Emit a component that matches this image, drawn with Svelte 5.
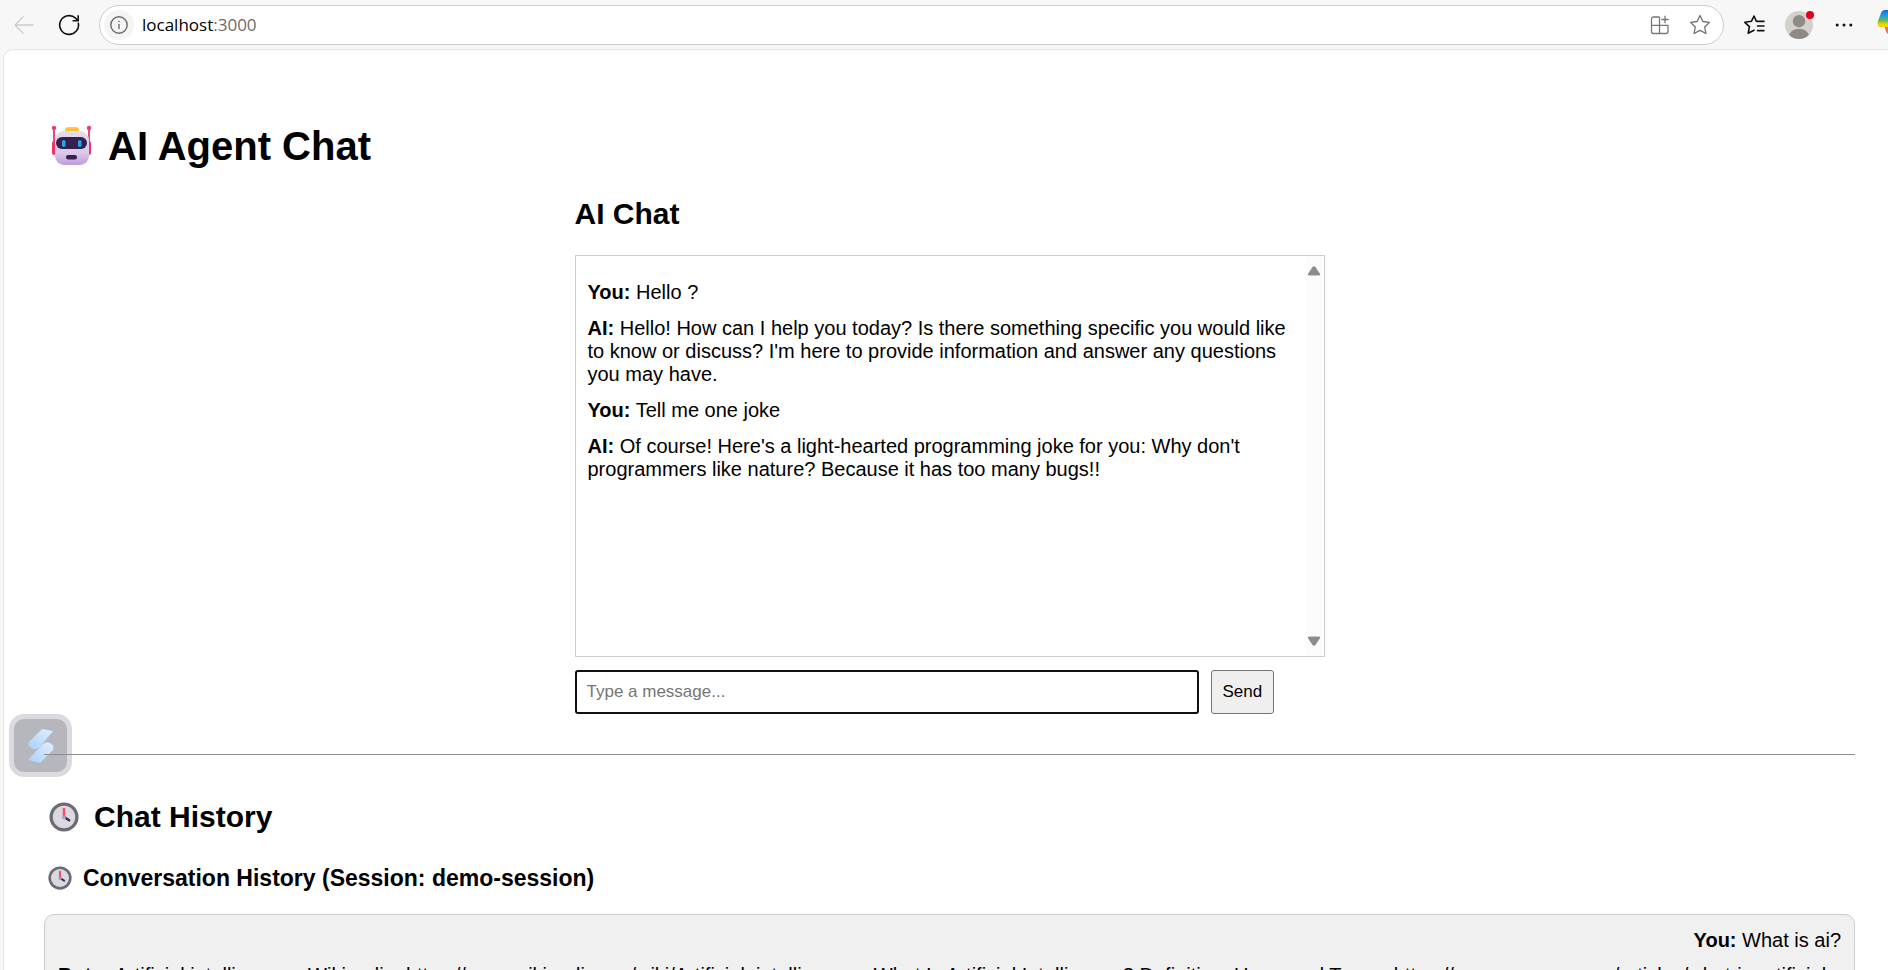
<script>
  const messages = [
    { who: 'You', text: 'Hello ?' },
    { who: 'AI', text: "Hello! How can I help you today? Is there something specific you would like to know or discuss? I'm here to provide information and answer any questions you may have." },
    { who: 'You', text: 'Tell me one joke' },
    { who: 'AI', text: "Of course! Here's a light-hearted programming joke for you: Why don't programmers like nature? Because it has too many bugs!!" }
  ];
  const answer =
    '- Artificial intelligence - Wikipedia: https://www.wikipedia.org/wiki/Artificial_intelligence - What Is Artificial Intelligence? Definition, Uses, and Types: https://www.coursera.org/articles/what-is-artificial-intelligence';
  let draft = $state('');
</script>

{#snippet clock(size)}
  <svg class="clock" width={size} height={size} viewBox="0 0 32 32" aria-hidden="true">
    <circle cx="16" cy="16" r="15.5" fill="#6d6a72" />
    <circle cx="16" cy="16" r="12" fill="#dcd8e2" />
    <path d="M16 16V6.500" stroke="#f0506e" stroke-width="2.800" />
    <path d="M16 16l5.500 3.500" stroke="#3c2b5c" stroke-width="2.600" stroke-linecap="round" />
    <circle cx="16" cy="16.500" r="2" fill="#aaa4b3" />
  </svg>
{/snippet}

<div class="browser">
  <header class="toolbar">
    <button class="tool" aria-label="Back">
      <svg width="22" height="22" viewBox="0 0 22 22" fill="none" stroke="#cdcdcd" stroke-width="1.400"><path d="M20.500 11H2M10.500 2.500L2 11l8.500 8.500" /></svg>
    </button>
    <button class="tool" aria-label="Refresh">
      <svg width="22" height="22" viewBox="0 0 22 22" fill="none" stroke="#111" stroke-width="1.600"><path d="M20.200 8.600A9.400 9.400 0 1 1 17.600 4.200L20 6.600M20.200 1.200v5.600h-5.600" /></svg>
    </button>
    <div class="address">
      <button class="info" aria-label="Site information">
        <svg width="18" height="18" viewBox="0 0 18 18" fill="none" stroke="#6b6b6b" stroke-width="1.400"><circle cx="9" cy="9" r="8.200" /><path d="M9 8v5" /><circle cx="9" cy="5.500" r=".6" fill="#6b6b6b" stroke-width=".6" /></svg>
      </button>
      <span class="url">localhost<span class="port">:3000</span></span>
      <button class="tool" aria-label="Install app">
        <svg width="20" height="20" viewBox="0 0 20 20" fill="none" stroke="#777" stroke-width="1.300"><path d="M9.500 2H3.500A2 2 0 0 0 1.500 4V16.500a2 2 0 0 0 2 2H16a2 2 0 0 0 2-2V10.300H1.500M9.500 2V18.500M15 .8v7.400M11.300 4.500h7.400" /></svg>
      </button>
      <button class="tool" aria-label="Add to favorites">
        <svg width="22" height="22" viewBox="0 0 22 22" fill="none" stroke="#6f6f6f" stroke-width="1.300" stroke-linejoin="round"><path d="M11 1.500l2.900 6 6.600.9-4.800 4.600 1.200 6.500-5.900-3.100-5.900 3.100 1.200-6.500L1.500 8.400l6.600-.9z" /></svg>
      </button>
    </div>
    <button class="tool" aria-label="Favorites">
      <svg width="22" height="22" viewBox="0 0 22 22" fill="none" stroke="#111" stroke-width="1.600" stroke-linejoin="round" stroke-linecap="round"><path d="M14.500 7.400L13.400 7.300 11 2 8.400 7.300l-6.600 1 4.600 4.400-1.200 6.500L11 16.200M14.500 7.400H21M14.500 12H21M14.500 16.600H21" /></svg>
    </button>
    <button class="tool" aria-label="Profile">
      <svg width="32" height="32" viewBox="0 0 32 32"><defs><clipPath id="face"><circle cx="16" cy="16" r="14" /></clipPath></defs><circle cx="16" cy="16" r="14" fill="#d3d1ce" /><g clip-path="url(#face)" fill="#8d8a87"><circle cx="16" cy="12.200" r="6.200" /><ellipse cx="16" cy="27.500" rx="10" ry="7.800" /></g><circle cx="27" cy="6" r="4" fill="#e50012" /></svg>
    </button>
    <button class="tool" aria-label="Settings and more">
      <svg width="18" height="6" viewBox="0 0 18 6" fill="#111"><circle cx="2.200" cy="3" r="1.500" /><circle cx="9" cy="3" r="1.500" /><circle cx="15.800" cy="3" r="1.500" /></svg>
    </button>
    <button class="copilot" aria-label="Copilot">
      <svg width="28" height="28" viewBox="0 0 28 28"><defs><linearGradient id="wing" x1="0" y1="0" x2="0" y2="1"><stop offset="0" stop-color="#1b68dc" /><stop offset=".3" stop-color="#189be8" /><stop offset=".6" stop-color="#62b84c" /><stop offset=".85" stop-color="#f3d50b" /></linearGradient></defs><path d="M7 18h13v8h-8c-3 0-3-4-5-8z" fill="#f6703b" /><path d="M8 2h14v14c-5 0-8 3-12 3H4c-4 0-4-3-3-6l3-8c1-2 2-3 4-3z" fill="url(#wing)" /></svg>
    </button>
  </header>

  <main class="page">
    <h1>
      <svg class="robot" width="42" height="42" viewBox="0 0 42 42" aria-hidden="true">
        <defs>
          <linearGradient id="head" x1="0" y1="0" x2="0" y2="1"><stop offset="0" stop-color="#e3dce8" /><stop offset=".65" stop-color="#dac9ea" /><stop offset="1" stop-color="#bd9bdc" /></linearGradient>
          <linearGradient id="cap" x1="0" y1="0" x2="0" y2="1"><stop offset="0" stop-color="#ffd640" /><stop offset="1" stop-color="#f4a32d" /></linearGradient>
        </defs>
        <path d="M3 4v15M38 4v15" stroke="#ef4678" stroke-width="2" />
        <circle cx="3" cy="3" r="2.200" fill="#f03c61" /><circle cx="38" cy="3" r="2.200" fill="#f03c61" />
        <rect x="1" y="16" width="6" height="14" rx="2.500" fill="#f0336b" /><rect x="34" y="16" width="6" height="14" rx="2.500" fill="#f0336b" />
        <rect x="14" y="2" width="14" height="7" rx="2.500" fill="url(#cap)" />
        <rect x="4" y="6" width="34" height="34" rx="9" fill="url(#head)" />
        <rect x="5" y="12" width="31" height="12" rx="6" fill="#35204e" />
        <rect x="11" y="15" width="3.500" height="7" rx="1.700" fill="#20a9f0" /><rect x="27" y="15" width="3.500" height="7" rx="1.700" fill="#20a9f0" />
        <rect x="15" y="30" width="11" height="4.500" rx="2.200" fill="#35204e" />
      </svg>
      AI Agent Chat
    </h1>

    <section class="chat">
      <h2>AI Chat</h2>
      <div class="window">
        <div class="messages">
          {#each messages as message}
            <p><strong>{message.who}:</strong> {message.text}</p>
          {/each}
        </div>
        <div class="track" aria-hidden="true">
          <svg width="14" height="10" viewBox="0 0 14 10"><path d="M5.400 1.200Q7-.8 8.600 1.200L12.800 7.400Q13.800 9.500 11.800 9.500H2.200Q.2 9.500 1.200 7.400Z" fill="#8b8b8b" /></svg>
          <svg width="14" height="10" viewBox="0 0 14 10"><path d="M5.400 8.800Q7 10.800 8.600 8.800L12.800 2.600Q13.800.5 11.800.5H2.200Q.2.500 1.200 2.600Z" fill="#8b8b8b" /></svg>
        </div>
      </div>
      <form class="composer" onsubmit={(event) => event.preventDefault()}>
        <input type="text" aria-label="Message" placeholder="Type a message..." bind:value={draft} />
        <button type="submit">Send</button>
      </form>
    </section>

    <hr />

    <section>
      <h2 class="history">{@render clock(30)}Chat History</h2>
      <h3>{@render clock(24)}Conversation History (Session: demo-session)</h3>
      <div class="log">
        <p class="mine"><strong>You:</strong> What is ai?</p>
        <p><strong>Bot:</strong> {answer}</p>
      </div>
    </section>
  </main>

  <button class="widget" aria-label="Open assistant">
    <svg width="28" height="36" viewBox="0 0 28 36"><defs><linearGradient id="bolt" x1="0" y1="1" x2="1" y2="0"><stop offset="0" stop-color="#a9d0fa" /><stop offset="1" stop-color="#e0f0ff" /></linearGradient></defs><path d="M15 1L26 3 12 20Q9 22 5 20.500Q0 18 2 14Z" fill="url(#bolt)" /><path d="M13 35L1 32 16 16Q19 13 23 15Q28 18 26 22Z" fill="url(#bolt)" /></svg>
  </button>
</div>

<style>
  :global(body) { margin: 0; overflow: hidden; }
  .browser { position: relative; height: 100vh; overflow: hidden; background: #f7f7f7; color: #000; font: 20px/23px "Liberation Sans", Arial, sans-serif; }
  button { font: inherit; color: inherit; }
  .toolbar { display: flex; align-items: center; gap: 5px; height: 49px; padding-left: 4px; }
  .tool { display: flex; align-items: center; justify-content: center; flex: none; width: 40px; height: 36px; padding: 0; border: 0; background: none; }
  .address { display: flex; align-items: center; flex: 1; box-sizing: border-box; height: 40px; margin: 0 5px; padding: 0 3px 0 4px; border: 1px solid #cdcdcd; border-radius: 20px; background: #fff; }
  .info { display: flex; align-items: center; justify-content: center; width: 30px; height: 30px; padding: 0; border: 0; border-radius: 50%; background: #f4f4f4; }
  .url { flex: 1; margin-left: 8px; font: 17px/24px "Open Sans", "Noto Sans", sans-serif; }
  .port { color: #6b6b6b; }
  .copilot { flex: none; width: 19px; height: 36px; padding: 0 0 0 8px; border: 0; background: none; overflow: hidden; text-align: left; }
  .page { box-sizing: border-box; min-height: 100%; margin-left: 3px; padding: 72px 33px 40px 40px; border: 1px solid #e6e6e6; border-right: 0; border-radius: 10px 0 0 0; background: #fff; }
  h1, h2, h3, p { margin: 0; }
  h1 { display: flex; align-items: center; gap: 15px; padding-left: 7px; font-size: 40px; line-height: 48px; }
  h2 { font-size: 30px; line-height: 34px; }
  .chat { width: 750px; max-width: 100%; margin: 27px auto 0; }
  .window { display: flex; box-sizing: border-box; height: 402px; margin: 24px 0 13px; border: 1px solid #ccc; }
  .messages { display: flex; flex: 1; flex-direction: column; gap: 13px; padding: 25px 12px; }
  .track { display: flex; flex-direction: column; justify-content: space-between; align-items: center; width: 19px; padding: 10px 0; background: #fcfcfc; }
  .track svg { display: block; }
  .composer { display: flex; gap: 12px; }
  .composer input { box-sizing: border-box; width: 624px; height: 44px; padding: 0 10px; border: 2px solid #101010; border-radius: 3px; outline: 0; background: #fff; font: 17px/20px "Liberation Sans", Arial, sans-serif; }
  .composer input::placeholder { color: #757575; opacity: 1; }
  .composer button { height: 44px; padding: 0 11px; border: 1px solid #767676; border-radius: 3px; background: #efefef; font-size: 17px; line-height: 20px; }
  hr { position: relative; z-index: 1; height: 1px; margin: 40px 0 45px; border: 0; background: #8c8c8c; }
  .history { display: flex; align-items: center; gap: 15px; padding-left: 5px; }
  h3 { display: flex; align-items: center; gap: 11px; margin: 30px 0 22px; padding-left: 4px; font-size: 23px; line-height: 28px; }
  .clock { flex: none; }
  .log { padding: 14px 13px; border: 1px solid #ccc; border-radius: 10px; background: #f0f0f0; }
  .log p + p { margin-top: 12px; }
  .mine { text-align: right; }
  .widget { position: absolute; left: 9px; top: 714px; display: flex; align-items: center; justify-content: center; width: 63px; height: 63px; padding: 0; border: 5px solid #dadadf; border-radius: 15px; background: #b6b6bd; }
</style>
